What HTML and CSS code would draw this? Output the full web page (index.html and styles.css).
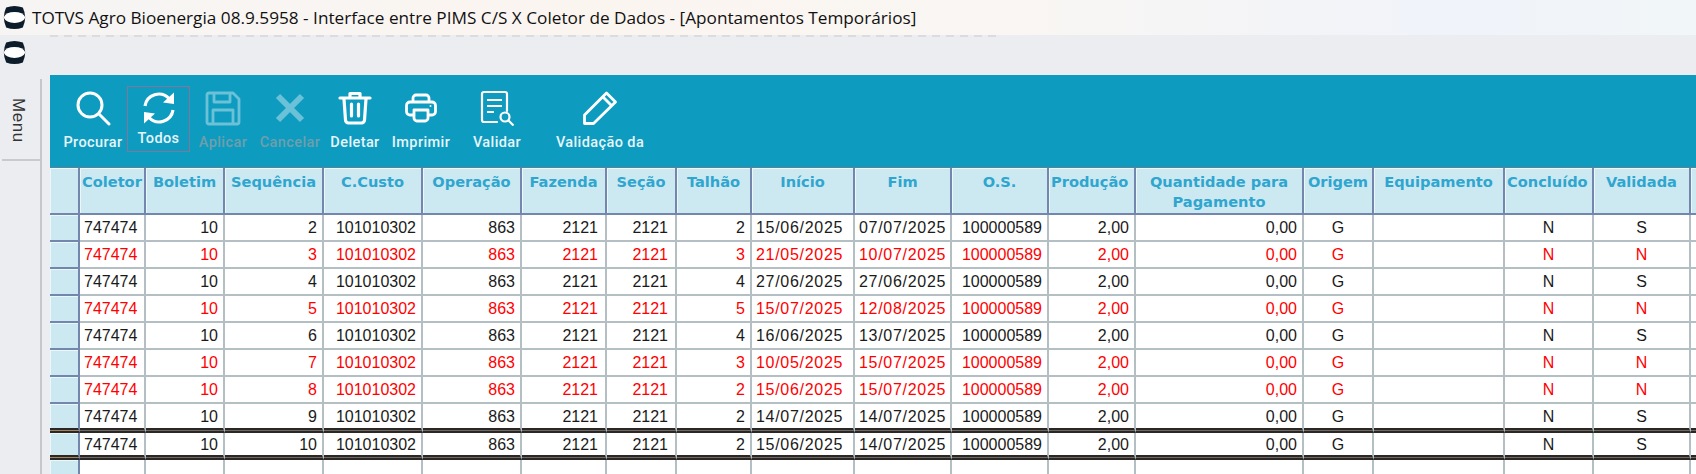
FILE: index.html
```html
<!DOCTYPE html>
<html lang="pt">

<head>
  <meta charset="UTF-8">
  <title>TOTVS Agro Bioenergia</title>
  <link rel="stylesheet" href="styles.css">
</head>

<body>
  <div class="titlebar">
    <svg class="logo" viewBox="0 0 24 24">
      <path d="M4 2.500Q12 -.5 20 2.500Q24.500 12 20 21.500Q12 24.500 4 21.500Q-.5 12 4 2.500z" fill="#0d1c2a" />
      <path d="M1.500 12Q4 6.800 12 6.800T22.500 12Q20 17.200 12 17.200T1.500 12z" fill="#fff" />
    </svg>
    <span class="title-text">TOTVS Agro Bioenergia 08.9.5958 - Interface entre PIMS C/S X Coletor de Dados - [Apontamentos Temporários]</span>
  </div>

  <div class="menubar">
    <div class="title-edge"></div>
    <svg class="logo" viewBox="0 0 24 24">
      <path d="M4 2.500Q12 -.5 20 2.500Q24.500 12 20 21.500Q12 24.500 4 21.500Q-.5 12 4 2.500z" fill="#0d1c2a" />
      <path d="M1.500 12Q4 6.800 12 6.800T22.500 12Q20 17.200 12 17.200T1.500 12z" fill="#fff" />
    </svg>
  </div>

  <div class="workspace">
    <aside class="sidebar">
      <div class="menu-tab"><span class="menu-label">Menu</span></div>
    </aside>

    <main class="content">
      <div class="toolbar">
        <div class="tool">
          <svg class="icon" viewBox="0 0 36 36" fill="none" stroke="#fff" stroke-width="3" stroke-linecap="round">
            <circle cx="15" cy="15" r="12" />
            <path d="M24 24l10 10" />
          </svg>
          <span class="tool-label">Procurar</span>
        </div>
        <div class="tool tool-active">
          <svg class="icon" viewBox="0 0 36 36" fill="none" stroke="#fff" stroke-width="3.200">
            <path d="M4 16A14 14 0 0 1 28 8.500" />
            <path d="M32 20A14 14 0 0 1 8 27.500" />
            <path d="M33 2.500V14L22 12.500z" fill="#fff" stroke="none" />
            <path d="M3 33.500V22L14 23.500z" fill="#fff" stroke="none" />
          </svg>
          <span class="tool-label">Todos</span>
        </div>
        <div class="tool tool-off">
          <svg class="icon" viewBox="0 0 36 36" fill="none" stroke="#fff" stroke-width="2.800" stroke-linejoin="round">
            <path d="M2 5a2 2 0 0 1 2-2h24l6 6v23a2 2 0 0 1-2 2H4a2 2 0 0 1-2-2z" />
            <path d="M9 3v9h16V3M8 34V20h20v14" />
          </svg>
          <span class="tool-label">Aplicar</span>
        </div>
        <div class="tool tool-off">
          <svg class="icon" viewBox="0 0 36 36" fill="none" stroke="#fff" stroke-width="6">
            <path d="M6 6l24 24M30 6L6 30" />
          </svg>
          <span class="tool-label">Cancelar</span>
        </div>
        <div class="tool">
          <svg class="icon" viewBox="0 0 36 36" fill="none" stroke="#fff" stroke-width="3.200" stroke-linecap="round" stroke-linejoin="round">
            <path d="M3 8h30M13 7V3.500h10V7" />
            <path d="M7 9l1.500 21a3 3 0 0 0 3 3h13a3 3 0 0 0 3-3L29 9" />
            <path d="M14.500 14v12M21.500 14v12" />
          </svg>
          <span class="tool-label">Deletar</span>
        </div>
        <div class="tool">
          <svg class="icon" viewBox="0 0 36 36" fill="none" stroke="#fff" stroke-width="2.800" stroke-linejoin="round">
            <path d="M10 12V8a3 3 0 0 1 3-3h10a3 3 0 0 1 3 3v4" />
            <path d="M10 25H7a3.500 3.500 0 0 1-3.500-3.500v-6A3.500 3.500 0 0 1 7 12h22a3.500 3.500 0 0 1 3.500 3.500v6A3.500 3.500 0 0 1 29 25h-3" />
            <path d="M11 20h14v8a3 3 0 0 1-3 3h-8a3 3 0 0 1-3-3z" />
            <circle cx="27.500" cy="16" r="1" fill="#fff" stroke="none" />
          </svg>
          <span class="tool-label">Imprimir</span>
        </div>
        <div class="tool">
          <svg class="icon" viewBox="0 0 36 36" fill="none" stroke="#fff" stroke-width="2.200">
            <path d="M18 32H5a2 2 0 0 1-2-2V4a2 2 0 0 1 2-2h21a2 2 0 0 1 2 2v17" stroke-linecap="round" />
            <path d="M8 10h15M8 16h15M8 22h7" stroke-width="2" />
            <circle cx="26" cy="27" r="4.500" />
            <path d="M29.500 30.500l5 5" />
          </svg>
          <span class="tool-label">Validar</span>
        </div>
        <div class="tool">
          <svg class="icon" viewBox="0 0 36 36" fill="none" stroke="#fff" stroke-width="2.800" stroke-linejoin="round">
            <path d="M2.500 33.500V25L24.500 3l9 9-22 21.500z" />
            <path d="M21 7l8.500 8.500" />
          </svg>
          <span class="tool-label">Validação da</span>
        </div>
      </div>

      <table class="grid">
        <colgroup>
          <col class="c-ind">
          <col class="c-col">
          <col class="c-bol">
          <col class="c-seq">
          <col class="c-cus">
          <col class="c-ope">
          <col class="c-faz">
          <col class="c-sec">
          <col class="c-tal">
          <col class="c-ini">
          <col class="c-fim">
          <col class="c-os">
          <col class="c-pro">
          <col class="c-qtd">
          <col class="c-ori">
          <col class="c-equ">
          <col class="c-con">
          <col class="c-val">
          <col class="c-end">
        </colgroup>
        <thead>
          <tr>
            <th></th>
            <th>Coletor</th>
            <th>Boletim</th>
            <th>Sequência</th>
            <th>C.Custo</th>
            <th>Operação</th>
            <th>Fazenda</th>
            <th>Seção</th>
            <th>Talhão</th>
            <th>Início</th>
            <th>Fim</th>
            <th>O.S.</th>
            <th>Produção</th>
            <th>Quantidade para Pagamento</th>
            <th>Origem</th>
            <th>Equipamento</th>
            <th>Concluído</th>
            <th>Validada</th>
            <th></th>
          </tr>
        </thead>
        <tbody id="rows"></tbody>
      </table>
    </main>
  </div>

  <script>
    // seq, talhao, inicio, fim, validada
    const data = [
      [2, 2, '15/06/2025', '07/07/2025', 'S'],
      [3, 3, '21/05/2025', '10/07/2025', 'N'],
      [4, 4, '27/06/2025', '27/06/2025', 'S'],
      [5, 5, '15/07/2025', '12/08/2025', 'N'],
      [6, 4, '16/06/2025', '13/07/2025', 'S'],
      [7, 3, '10/05/2025', '15/07/2025', 'N'],
      [8, 2, '15/06/2025', '15/07/2025', 'N'],
      [9, 2, '14/07/2025', '14/07/2025', 'S'],
      [10, 2, '15/06/2025', '14/07/2025', 'S']
    ];

    function cell(text, cls) {
      return `<td class="${cls}">${text}</td>`;
    }

    const tbody = document.getElementById('rows');
    let html = '';
    data.forEach(function (r, i) {
      let cls = r[4] === 'N' ? 'invalid' : '';
      if (i === 7) cls += ' before-current';
      if (i === 8) cls += ' current';
      html += `<tr class="${cls}">`
        + cell('', 'ind')
        + cell('747474', 'l')
        + cell('10', 'r')
        + cell(r[0], 'r')
        + cell('101010302', 'r')
        + cell('863', 'r')
        + cell('2121', 'r wide')
        + cell('2121', 'r wide')
        + cell(r[1], 'r')
        + cell(r[2], 'l date')
        + cell(r[3], 'l date')
        + cell('100000589', 'r')
        + cell('2,00', 'r')
        + cell('0,00', 'r')
        + cell('G', 'c')
        + cell('', 'l')
        + cell('N', 'c')
        + cell(r[4], 'c')
        + cell('', 'l')
        + '</tr>';
    });
    html += '<tr class="blank">' + cell('', 'ind') + cell('', 'l').repeat(18) + '</tr>';
    tbody.innerHTML = html;
  </script>
</body>

</html>
```

FILE: styles.css
```css
html, body {
  margin: 0;
  height: 474px;
  overflow: hidden;
}

body {
  background: #ecedf1;
  font-family: "Liberation Sans", Arial, sans-serif;
  color: #1a1a1a;
}

.titlebar {
  height: 35px;
  display: flex;
  align-items: center;
  background: linear-gradient(90deg, #f6f5f4 0%, #fbf5f0 35%, #f9f6f3 60%, #f0f3fa 85%, #f1f6f8 100%);
}

.logo {
  display: block;
  width: 25px;
  height: 25px;
  margin-left: 2px;
  flex: none;
}

.title-text {
  margin-left: 5px;
  font-family: "Open Sans", "Noto Sans", sans-serif;
  font-size: 17.2px;
  color: #111;
  white-space: nowrap;
}

.menubar {
  height: 40px;
  box-sizing: border-box;
}

.title-edge {
  width: 950px;
  height: 2px;
  margin: 0 0 3px 50px;
  background: repeating-linear-gradient(90deg, #dcdcde 0 8px, transparent 8px 14px);
}

.workspace {
  display: flex;
}

.sidebar {
  width: 42px;
  height: 399px;
  margin-right: 8px;
  box-sizing: border-box;
  border-right: 2px solid #c6c7ca;
  margin-top: 4px;
}

.menu-tab {
  height: 82px;
  margin-left: 2px;
  border-bottom: 2px solid #c9cacc;
  box-sizing: border-box;
  padding-top: 19px;
}

.menu-label {
  display: block;
  writing-mode: vertical-rl;
  font-family: "Liberation Sans", Arial, sans-serif;
  font-size: 17px;
  letter-spacing: 0.6px;
  margin-left: 6px;
  color: #333;
}

.content {
  flex: 1;
  min-width: 0;
}

.toolbar {
  height: 93px;
  box-sizing: border-box;
  background: #0e9bc0;
  padding: 11px 0 0 9px;
  display: grid;
  grid-template-columns: 68px 63px 66px 68px 62px 70px 82px 124px;
  align-items: start;
  border-bottom: 1px solid #5f8296;
}

.tool {
  display: flex;
  flex-direction: column;
  align-items: center;
  box-sizing: border-box;
  height: 66px;
  padding-top: 4px;
}

.icon {
  width: 36px;
  height: 36px;
  flex: none;
}

.tool-label {
  margin-top: 9px;
  font-family: Roboto, sans-serif;
  font-weight: 500;
  font-size: 14.5px;
  letter-spacing: 0.4px;
  line-height: 16px;
  color: #e6f5f9;
  white-space: nowrap;
}

.tool-active {
  border: 1px solid #80779b;
  padding-top: 3px;
}

.tool-active .tool-label {
  margin-top: 5px;
}

.tool-off .icon {
  opacity: 0.38;
}

.tool-off .tool-label {
  color: #6f9fac;
}

.grid {
  table-layout: fixed;
  width: 1660px;
  border-collapse: separate;
  border-spacing: 0;
}

.c-ind { width: 30px; }
.c-col { width: 66px; }
.c-bol { width: 79px; }
.c-seq { width: 99px; }
.c-cus { width: 99px; }
.c-ope { width: 99px; }
.c-faz { width: 85px; }
.c-sec { width: 70px; }
.c-tal { width: 75px; }
.c-ini { width: 103px; }
.c-fim { width: 97px; }
.c-os { width: 97px; }
.c-pro { width: 87px; }
.c-qtd { width: 168px; }
.c-ori { width: 70px; }
.c-equ { width: 131px; }
.c-con { width: 89px; }
.c-val { width: 97px; }

th {
  height: 47px;
  box-sizing: border-box;
  padding: 4px 1px 0;
  vertical-align: top;
  background: #cce9f2;
  border-right: 2px solid #7386ad;
  border-bottom: 2px solid #7386ad;
  box-shadow: inset 1px 1px 0 #eaf7fb;
  font-family: "DejaVu Sans", sans-serif;
  font-weight: 700;
  font-size: 14.6px;
  line-height: 20px;
  color: #2fa6cf;
  overflow: hidden;
  white-space: normal;
}

th:nth-child(2),
th:nth-child(13),
th:nth-child(17) {
  white-space: nowrap;
  text-align: left;
  padding-left: 2px;
}

td {
  height: 27px;
  box-sizing: border-box;
  padding: 1px 5px 0;
  background: #fff;
  border-right: 2px solid #b3bfc2;
  border-bottom: 2px solid #b3bfc2;
  font-size: 16px;
  line-height: 20px;
  white-space: nowrap;
  overflow: hidden;
}

td.ind {
  background: #cce9f2;
  border-right-color: #7386ad;
  border-bottom-color: #7386ad;
  box-shadow: inset 1px 1px 0 #eaf7fb;
}

.l { text-align: left; padding-left: 4px; }
.r { text-align: right; }
.c { text-align: center; }

.date {
  letter-spacing: 0.7px;
}

.wide {
  padding-right: 7px;
}

.invalid td {
  color: #ff0000;
}

/* the current record is framed by two thick lines */
.before-current td,
.current td {
  border-bottom: 5px solid transparent;
  background: #fff linear-gradient(#2a2725 0 2px, #6b6866 2px 3px, #2a2725 3px 5px) no-repeat left bottom / 100% 5px border-box;
}

.before-current td {
  height: 29px;
}

.before-current td.ind,
.current td.ind {
  background: #cce9f2 linear-gradient(#2a2725 0 2px, #a0845f 2px 3px, #2a2725 3px 5px) no-repeat left bottom / 100% 5px border-box;
}

.blank td {
  height: 30px;
  border-bottom: none;
}
```
